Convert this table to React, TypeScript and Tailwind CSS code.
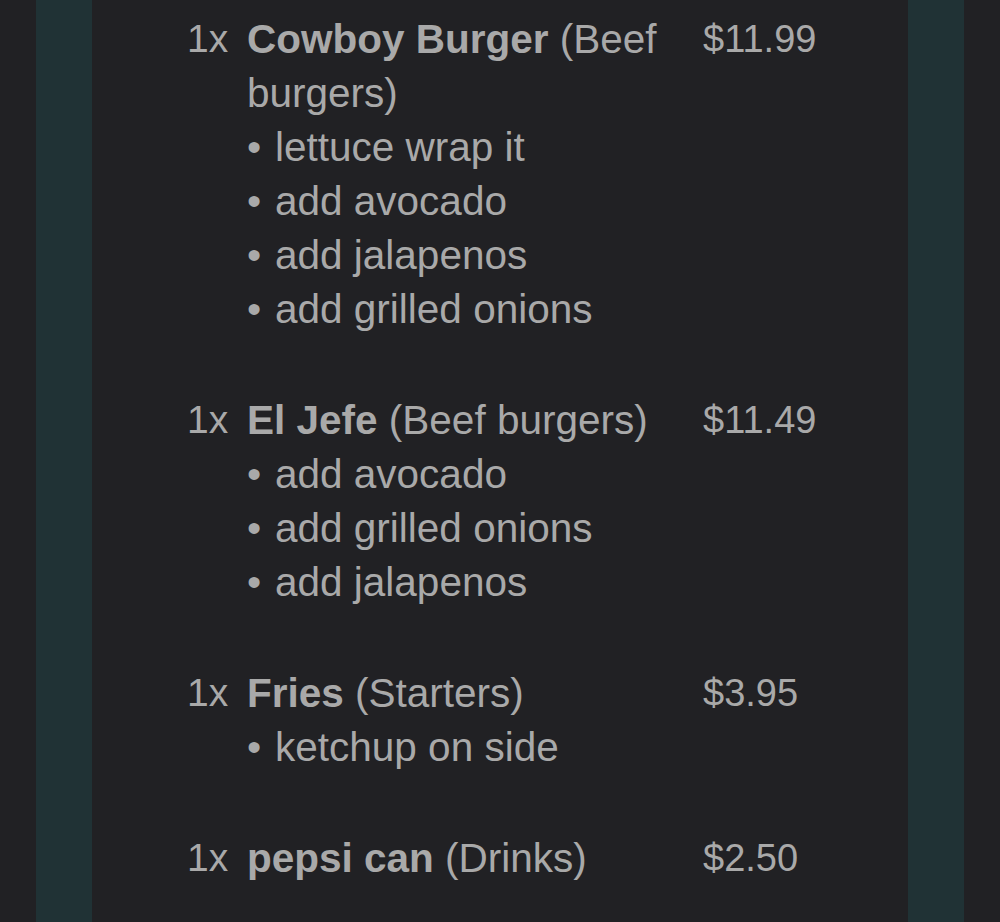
import React from 'react';

type Item = {
  qty: number;
  name: string;
  category: string;
  price: string;
  mods: string[];
};

const items: Item[] = [
  {
    qty: 1,
    name: 'Cowboy Burger',
    category: 'Beef burgers',
    price: '$11.99',
    mods: ['lettuce wrap it', 'add avocado', 'add jalapenos', 'add grilled onions'],
  },
  {
    qty: 1,
    name: 'El Jefe',
    category: 'Beef burgers',
    price: '$11.49',
    mods: ['add avocado', 'add grilled onions', 'add jalapenos'],
  },
  {
    qty: 1,
    name: 'Fries',
    category: 'Starters',
    price: '$3.95',
    mods: ['ketchup on side'],
  },
  {
    qty: 1,
    name: 'pepsi can',
    category: 'Drinks',
    price: '$2.50',
    mods: [],
  },
];

export default function App() {
  return (
    <div className="flex h-screen w-full overflow-hidden bg-[#212124] font-[family-name:'Liberation_Sans',Arial,sans-serif] text-[#a9a9a9]">
      <div className="w-[36px] shrink-0" />
      {/* left rail */}
      <div className="w-[56px] shrink-0 bg-[#203235]" />

      {/* Ticket */}
      <div className="flex-1 pl-[95px] pt-[12px] leading-[54px]">
        {items.map((item, i) => (
          <div key={i} className="mb-[57px] grid grid-cols-[44px_440px_auto] gap-x-[16px]">
            <span className="text-[39px]">{item.qty}x</span>
            <div className="text-[40.5px]">
              <p>
                <span className="font-bold">{item.name}</span> ({item.category})
              </p>
              {item.mods.map((m) => (
                <p key={m}>
                  <span className="inline-block w-[28px]">•</span>
                  {m}
                </p>
              ))}
            </div>
            <span className="text-[38px]">{item.price}</span>
          </div>
        ))}
      </div>

      {/* right rail */}
      <div className="w-[56px] shrink-0 bg-[#203235]" />
      <div className="w-[36px] shrink-0" />
    </div>
  );
}
